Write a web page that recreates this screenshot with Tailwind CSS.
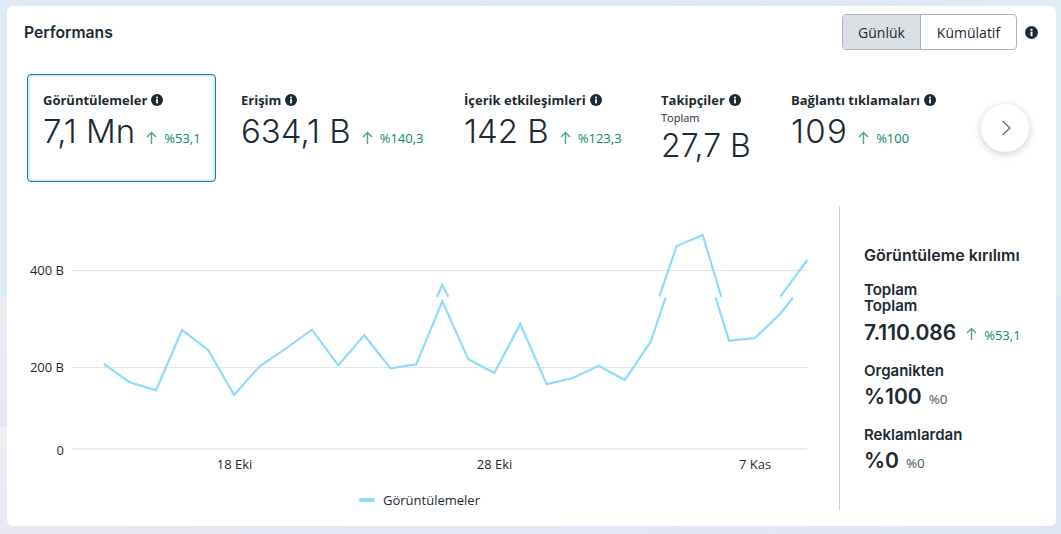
<!DOCTYPE html>
<html lang="tr">
<head>
    <meta charset="UTF-8">
    <title>Performans</title>
    <script src="https://cdn.jsdelivr.net/npm/@tailwindcss/browser@4"></script>
</head>
<body class="relative w-[1061px] h-[534px] overflow-hidden font-['Open_Sans',sans-serif] text-[#1c2b33]">
    <!-- Page background bands -->
    <div class="absolute inset-0 flex flex-col">
        <div class="h-[297px] flex">
            <div class="w-[7px] bg-[#dcebf8]"></div>
            <div class="flex-1 bg-[linear-gradient(90deg,#e0e9f4_0%,#dfe8f4_80%,#e0edf1_100%)]"></div>
        </div>
        <div class="h-[130px] flex">
            <div class="w-[7px] bg-[linear-gradient(180deg,#f2ecf2,#e8e6f4)]"></div>
            <div class="flex-1 bg-[#dde8f7]"></div>
        </div>
        <div class="flex-1 flex">
            <div class="w-[7px] bg-[linear-gradient(180deg,#f3eef3,#e9e7f3)]"></div>
            <div class="flex-1 bg-[linear-gradient(90deg,#e8e7f3,#e0e6f6)]"></div>
        </div>
    </div>

    <main class="relative h-[534px] px-[7px] pt-[6px]">
        <section class="w-[1049px] h-[520px] bg-white rounded-[6px] px-[17px]">
            <!-- Header -->
            <div class="flex justify-between h-[68px]">
                <h1 class="mt-[17px] font-['Inter',sans-serif] text-[15.7px] font-semibold leading-5">Performans</h1>
                <div class="flex items-start mt-[8px] mr-[1px]">
                    <div class="flex h-[36px] w-[175px] border border-[#a8b3bf] rounded-[4px] overflow-hidden text-[14px]">
                        <span class="w-[78px] flex items-center justify-center bg-[#dbe0e5] border-r border-[#a8b3bf]">Günlük</span>
                        <span class="flex-1 flex items-center justify-center">Kümülatif</span>
                    </div>
                    <svg class="ml-[8px] mt-[12px]" width="13" height="13" viewBox="0 0 16 16"><circle cx="8" cy="8" r="8" fill="#1c2b33"/><rect x="6.8" y="7" width="2.4" height="5.5" fill="#fff"/><rect x="6.8" y="3.5" width="2.4" height="2.4" fill="#fff"/></svg>
                </div>
            </div>

            <!-- Metrics -->
            <div class="flex h-[132px] items-start relative">
                <div class="ml-[3px] w-[189px] h-[108px] border border-[#0a78be] rounded-[4px] shadow-[inset_0_0_0_2px_#dcecf8] pl-[15px] pt-[16px]">
                    <div class="flex items-center text-[13px] font-bold leading-[18px]">Görüntülemeler<svg class="ml-[4px]" width="12" height="12" viewBox="0 0 16 16"><circle cx="8" cy="8" r="8" fill="#1c2b33"/><rect x="6.8" y="7" width="2.4" height="5.5" fill="#fff"/><rect x="6.8" y="3.5" width="2.4" height="2.4" fill="#fff"/></svg></div>
                    <div class="flex items-baseline mt-[3px] font-['Inter',sans-serif] text-[33px] font-light leading-[38px]">7,1 Mn<span class="flex items-baseline font-['Open_Sans',sans-serif] text-[13px] font-normal text-[#0a8a6a]"><svg class="ml-[11px] mr-[7px] self-center translate-y-[-1px]" width="11" height="13" viewBox="0 0 11 13" fill="none" stroke="#4fa88a" stroke-width="1.4"><path d="M5.5 13V1.5M1 6l4.5-4.5L10 6"/></svg>%53,1</span></div>
                </div>
                <div class="ml-[25px] w-[223px] pt-[17px]">
                    <div class="flex items-center text-[13px] font-bold leading-[18px]">Erişim<svg class="ml-[4px]" width="12" height="12" viewBox="0 0 16 16"><circle cx="8" cy="8" r="8" fill="#1c2b33"/><rect x="6.8" y="7" width="2.4" height="5.5" fill="#fff"/><rect x="6.8" y="3.5" width="2.4" height="2.4" fill="#fff"/></svg></div>
                    <div class="flex items-baseline mt-[3px] font-['Inter',sans-serif] text-[33px] font-light leading-[38px]">634,1 B<span class="flex items-baseline font-['Open_Sans',sans-serif] text-[13px] font-normal text-[#0a8a6a]"><svg class="ml-[11px] mr-[7px] self-center translate-y-[-1px]" width="11" height="13" viewBox="0 0 11 13" fill="none" stroke="#4fa88a" stroke-width="1.4"><path d="M5.5 13V1.5M1 6l4.5-4.5L10 6"/></svg>%140,3</span></div>
                </div>
                <div class="w-[197px] pt-[17px]">
                    <div class="flex items-center text-[13px] font-bold leading-[18px]">İçerik etkileşimleri<svg class="ml-[4px]" width="12" height="12" viewBox="0 0 16 16"><circle cx="8" cy="8" r="8" fill="#1c2b33"/><rect x="6.8" y="7" width="2.4" height="5.5" fill="#fff"/><rect x="6.8" y="3.5" width="2.4" height="2.4" fill="#fff"/></svg></div>
                    <div class="flex items-baseline mt-[3px] font-['Inter',sans-serif] text-[33px] font-light leading-[38px]">142 B<span class="flex items-baseline font-['Open_Sans',sans-serif] text-[13px] font-normal text-[#0a8a6a]"><svg class="ml-[11px] mr-[7px] self-center translate-y-[-1px]" width="11" height="13" viewBox="0 0 11 13" fill="none" stroke="#4fa88a" stroke-width="1.4"><path d="M5.5 13V1.5M1 6l4.5-4.5L10 6"/></svg>%123,3</span></div>
                </div>
                <div class="w-[130px] pt-[17px]">
                    <div class="flex items-center text-[13px] font-bold leading-[18px]">Takipçiler<svg class="ml-[4px]" width="12" height="12" viewBox="0 0 16 16"><circle cx="8" cy="8" r="8" fill="#1c2b33"/><rect x="6.8" y="7" width="2.4" height="5.5" fill="#fff"/><rect x="6.8" y="3.5" width="2.4" height="2.4" fill="#fff"/></svg></div>
                    <div class="text-[11px] leading-[14px] mt-[2px]">Toplam</div>
                    <div class="font-['Inter',sans-serif] text-[32px] font-light leading-[38px] mt-[2px]">27,7 B</div>
                </div>
                <div class="pt-[17px]">
                    <div class="flex items-center text-[13px] font-bold leading-[18px]">Bağlantı tıklamaları<svg class="ml-[4px]" width="12" height="12" viewBox="0 0 16 16"><circle cx="8" cy="8" r="8" fill="#1c2b33"/><rect x="6.8" y="7" width="2.4" height="5.5" fill="#fff"/><rect x="6.8" y="3.5" width="2.4" height="2.4" fill="#fff"/></svg></div>
                    <div class="flex items-baseline mt-[3px] font-['Inter',sans-serif] text-[33px] font-light leading-[38px]"><span class="tracking-[1.3px]">109</span><span class="flex items-baseline font-['Open_Sans',sans-serif] text-[13px] font-normal text-[#0a8a6a]"><svg class="ml-[10px] mr-[7px] self-center translate-y-[-1px]" width="11" height="13" viewBox="0 0 11 13" fill="none" stroke="#4fa88a" stroke-width="1.4"><path d="M5.5 13V1.5M1 6l4.5-4.5L10 6"/></svg>%100</span></div>
                </div>
                <button class="absolute left-[957px] top-[30px] w-[48px] h-[48px] rounded-full bg-white shadow-[0_2px_8px_rgba(0,0,0,0.2)] flex items-center justify-center">
                    <svg class="ml-[3px]" width="11" height="18" viewBox="0 0 11 18" fill="none" stroke="#5c6873" stroke-width="1.2"><path d="M1.5 2l7.5 7-7.5 7"/></svg>
                </button>
            </div>

            <!-- Chart and breakdown -->
            <div class="flex h-[304px]">
                <div class="relative w-[815px] h-[304px]">
                    <svg class="absolute left-[-24px] top-[-206px]" width="1061" height="534" viewBox="0 0 1061 534" fill="none">
                        <path d="M72 270.5H807M72 367.5H807" stroke="#e3e5e8" stroke-width="1"/>
                        <path d="M72 449H807" stroke="#eceef0" stroke-width="2"/>
                        <polyline stroke="#8ddbff" stroke-width="2.2" points="103.7,364 129.7,382.3 156,390.3 182,330 208,349.7 234,395 260,366 286,348.3 312,329.7 338.3,365.3 364.3,335.3 390.3,368.3 416.3,364.3 442.3,301.3 468.3,359.3 494.3,373 520.3,324 546.7,384.3 572.7,378 598.7,365.7 624.7,380 650.7,341.7 665.7,297.5"/>
                        <polyline stroke="#8ddbff" stroke-width="2.2" points="715.5,297.5 729,340.7 755,338 780.3,313.7 793,297.5"/>
                        <polyline stroke="#8ddbff" stroke-width="2.2" points="437,296.7 442.3,285 448.3,296.7"/>
                        <polyline stroke="#8ddbff" stroke-width="2.2" points="659.3,296.7 676.7,246 702.7,235 721.3,296.7"/>
                        <polyline stroke="#8ddbff" stroke-width="2.2" points="780.3,296.7 807.3,260"/>
                        <g fill="#1c2b33" font-family="Open Sans, sans-serif" font-size="13">
                            <text x="64" y="275" text-anchor="end">400 B</text>
                            <text x="64" y="372" text-anchor="end">200 B</text>
                            <text x="64" y="455" text-anchor="end">0</text>
                            <text x="234.5" y="469" text-anchor="middle">18 Eki</text>
                            <text x="494.5" y="469" text-anchor="middle">28 Eki</text>
                            <text x="755" y="469" text-anchor="middle">7 Kas</text>
                            <text x="383" y="505">Görüntülemeler</text>
                        </g>
                        <rect x="359" y="498" width="16" height="4" rx="2" fill="#8ddbff"/>
                    </svg>
                </div>
                <aside class="h-[304px] w-[193px] border-l border-[#ced0d4] pl-[24px] pt-[40px] font-['Inter',sans-serif] whitespace-nowrap">
                    <h2 class="text-[16px] font-semibold leading-[18px]">Görüntüleme kırılımı</h2>
                    <div class="mt-[18px] text-[15px] font-semibold leading-4">Toplam<br>Toplam</div>
                    <div class="flex items-baseline mt-[7px] text-[21px] font-semibold leading-6">7.110.086<span class="flex items-baseline font-['Open_Sans',sans-serif] text-[13px] font-normal text-[#0a8a6a]"><svg class="ml-[10px] mr-[7px] self-center translate-y-[-2px]" width="11" height="13" viewBox="0 0 11 13" fill="none" stroke="#4fa88a" stroke-width="1.4"><path d="M5.5 13V1.5M1 6l4.5-4.5L10 6"/></svg>%53,1</span></div>
                    <div class="mt-[16px] text-[15px] font-semibold leading-4">Organikten</div>
                    <div class="flex items-baseline mt-[6px] text-[21px] font-semibold leading-6">%100<span class="ml-[7px] font-['Open_Sans',sans-serif] text-[13.5px] font-normal text-[#465a69]">%0</span></div>
                    <div class="mt-[16px] text-[15px] font-semibold leading-4">Reklamlardan</div>
                    <div class="flex items-baseline mt-[6px] text-[21px] font-semibold leading-6">%0<span class="ml-[7px] font-['Open_Sans',sans-serif] text-[13.5px] font-normal text-[#465a69]">%0</span></div>
                </aside>
            </div>
        </section>
    </main>
</body>
</html>
